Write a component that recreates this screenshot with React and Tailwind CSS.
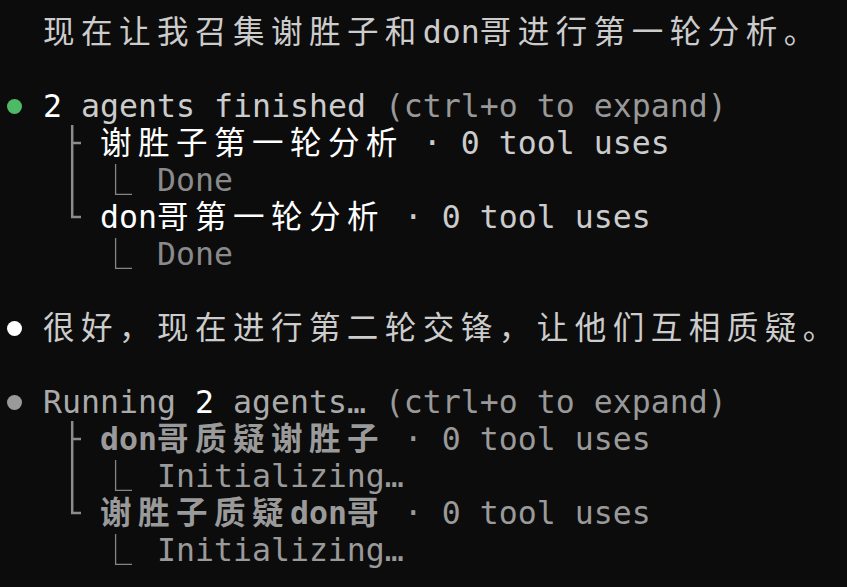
import React from "react";

// full-width characters take two terminal cells
const isWide = (c) => /[\u2e80-\u9fff\u3000-\u303f\uff00-\uffef]/.test(c);

function Txt({ children, className = "" }) {
    const parts = [];
    let run = "";
    [...children].forEach((c, i) => {
        if (isWide(c)) {
            if (run) parts.push(run);
            run = "";
            parts.push(
                <span key={i} className="inline-block w-[2ch] text-left">
                    {c}
                </span>
            );
        } else {
            run += c;
        }
    });
    if (run) parts.push(run);
    return <span className={className}>{parts}</span>;
}

function Dot({ color }) {
    return (
        <span className="inline-block w-[1ch] h-[37px] align-top">
            <span className={`block mt-[11px] ml-[2px] w-[15px] h-[15px] rounded-full ${color}`} />
        </span>
    );
}

// box drawing cell: ├ │ └
function Tree({ type }) {
    return (
        <span className="inline-block w-[1ch] h-[37px] align-top">
            <svg width="19" height="37" viewBox="0 0 19 37" className="block">
                {type === "tee" && (
                    <g stroke="#8c8c8c" strokeWidth="2.5" fill="none">
                        <line x1="10.2" y1="0" x2="10.2" y2="37" />
                        <line x1="10.2" y1="18" x2="19" y2="18" />
                    </g>
                )}
                {type === "pipe" && (
                    <line x1="10.2" y1="0" x2="10.2" y2="37" stroke="#8c8c8c" strokeWidth="2.5" />
                )}
                {type === "elbow" && (
                    <path d="M10.2 0 V18 H19" stroke="#8c8c8c" strokeWidth="2.5" fill="none" />
                )}
            </svg>
        </span>
    );
}

// ⎿ result marker, spans three cells
function Corner() {
    return (
        <span className="inline-block w-[3ch] h-[37px] align-top">
            <svg width="57" height="37" viewBox="0 0 57 37" className="block">
                <path d="M15.6 2 V32.4 H32" stroke="#858585" strokeWidth="1.3" fill="none" />
            </svg>
        </span>
    );
}

function Row({ children }) {
    return <div className="h-[37px] whitespace-pre">{children}</div>;
}

export default function App() {
    const finished = [
        { name: "谢胜子第一轮分析", tree: "tee", under: "pipe" },
        { name: "don哥第一轮分析", tree: "elbow", under: null },
    ];
    const running = [
        { name: "don哥质疑谢胜子", tree: "tee", under: "pipe" },
        { name: "谢胜子质疑don哥", tree: "elbow", under: null },
    ];

    return (
        <div className="w-[847px] h-[587px] overflow-hidden bg-[#0c0c0c] pt-[14px] pl-[5px] text-[31.56px] leading-[37px] text-[#cccccc] font-['DejaVu_Sans_Mono','Noto_Sans_CJK_SC',monospace]">
            <Row>
                {"  "}
                <Txt>现在让我召集谢胜子和don哥进行第一轮分析。</Txt>
            </Row>
            <Row />

            <Row>
                <Dot color="bg-[#4eba65]" />
                {" "}
                <span className="text-white">2</span>
                <span className="text-[#cccccc]"> agents finished </span>
                <span className="text-[#999999]">(ctrl+o to expand)</span>
            </Row>
            {finished.map((a) => (
                <React.Fragment key={a.name}>
                    <Row>
                        {"   "}
                        <Tree type={a.tree} />
                        {" "}
                        <Txt className="text-white">{a.name}</Txt>
                        <span className="text-[#cccccc]"> · 0 tool uses</span>
                    </Row>
                    <Row>
                        {"   "}
                        <Tree type={a.under} />
                        {" "}
                        <Corner />
                        <span className="text-[#8a8a8a]">Done</span>
                    </Row>
                </React.Fragment>
            ))}
            <Row />

            <Row>
                <Dot color="bg-white" />
                {" "}
                <Txt>很好，现在进行第二轮交锋，让他们互相质疑。</Txt>
            </Row>
            <Row />

            <Row>
                <Dot color="bg-[#9a9a9a]" />
                {" "}
                <span className="text-[#aaaaaa]">Running </span>
                <span className="text-white">2</span>
                <span className="text-[#aaaaaa]"> agents… </span>
                <span className="text-[#999999]">(ctrl+o to expand)</span>
            </Row>
            {running.map((a) => (
                <React.Fragment key={a.name}>
                    <Row>
                        {"   "}
                        <Tree type={a.tree} />
                        {" "}
                        <Txt className="text-[#9a9a9a] font-bold">{a.name}</Txt>
                        <span className="text-[#9a9a9a]"> · 0 tool uses</span>
                    </Row>
                    <Row>
                        {"   "}
                        <Tree type={a.under} />
                        {" "}
                        <Corner />
                        <span className="text-[#9a9a9a]">Initializing…</span>
                    </Row>
                </React.Fragment>
            ))}
        </div>
    );
}
